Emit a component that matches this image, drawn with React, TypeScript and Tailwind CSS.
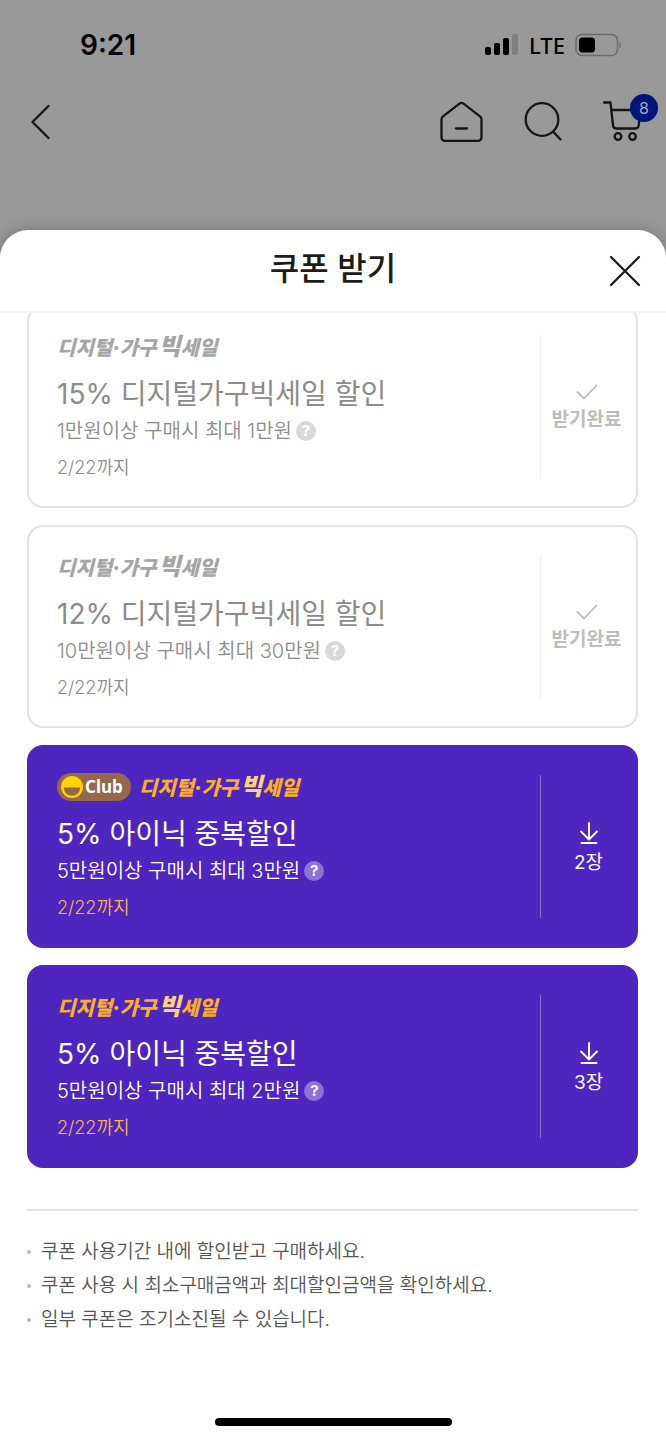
import clsx from 'clsx'

interface Coupon {
  id: number
  title: string
  condition: string
  until: string
  club?: boolean
  claimed?: boolean
  count?: number
}

const coupons: Coupon[] = [
  {
    id: 1,
    title: '15% 디지털가구빅세일 할인',
    condition: '1만원이상 구매시 최대 1만원',
    until: '2/22까지',
    claimed: true,
  },
  {
    id: 2,
    title: '12% 디지털가구빅세일 할인',
    condition: '10만원이상 구매시 최대 30만원',
    until: '2/22까지',
    claimed: true,
  },
  {
    id: 3,
    title: '5% 아이닉 중복할인',
    condition: '5만원이상 구매시 최대 3만원',
    until: '2/22까지',
    club: true,
    count: 2,
  },
  {
    id: 4,
    title: '5% 아이닉 중복할인',
    condition: '5만원이상 구매시 최대 2만원',
    until: '2/22까지',
    count: 3,
  },
]

const notes = [
  '쿠폰 사용기간 내에 할인받고 구매하세요.',
  '쿠폰 사용 시 최소구매금액과 최대할인금액을 확인하세요.',
  '일부 쿠폰은 조기소진될 수 있습니다.',
]

function StatusBar() {
  return (
    <div className="flex h-[90px] items-center justify-between pl-20 pr-11 text-black">
      <span className="text-[28px] font-semibold leading-9">9:21</span>
      <div className="flex items-center gap-2.5">
        <svg width="34" height="22" viewBox="0 0 34 22" aria-hidden="true">
          <rect x="0" y="13" width="6" height="8" rx="2" />
          <rect x="9" y="9" width="6" height="12" rx="2" />
          <rect x="18" y="4" width="6" height="17" rx="2" />
          <rect x="27" y="0" width="6" height="21" rx="2" fill="#808080" />
        </svg>
        <span className="font-['Noto_Sans',sans-serif] text-[22px] font-medium leading-6">LTE</span>
        <svg width="47" height="24" viewBox="0 0 47 24" aria-hidden="true">
          <rect x="1" y="1.5" width="41.5" height="21" rx="6" fill="none" stroke="#6b6b6b" strokeWidth="1.5" />
          <rect x="4" y="4.5" width="16" height="15" rx="3.5" />
          <path d="M44.5 8.5c1.8.8 1.8 6.2 0 7z" fill="#6b6b6b" />
        </svg>
      </div>
    </div>
  )
}

function AppHeader() {
  return (
    <nav className="flex items-center justify-between pl-7 pr-6 text-[#151515]">
      <button type="button" aria-label="뒤로" className="flex h-16 items-center">
        <svg width="24" height="36" viewBox="0 0 24 36" fill="none" stroke="currentColor" strokeWidth="2.3" strokeLinecap="round" strokeLinejoin="round">
          <path d="M20.5 2 4.5 18l16 16" />
        </svg>
      </button>
      <div className="flex items-center gap-10">
        <button type="button" aria-label="홈">
          <svg width="44" height="44" viewBox="0 0 44 44" fill="none" stroke="currentColor" strokeWidth="2.3" strokeLinecap="round" strokeLinejoin="round">
            <path d="M1.5 19.5c0-1.300.5-2.300 1.500-3.100L19.5 3.700c1.300-1 2.700-1 4 0L40 16.400c1 .8 1.500 1.800 1.500 3.100V37.500a3.300 3.300 0 0 1-3.300 3.300H4.800A3.300 3.300 0 0 1 1.500 37.500z" />
            <path d="M16 28.500h11" />
          </svg>
        </button>
        <button type="button" aria-label="검색">
          <svg width="38" height="44" viewBox="0 0 38 44" fill="none" stroke="currentColor" strokeWidth="2.3" strokeLinecap="round">
            <circle cx="18" cy="19.5" r="16.3" />
            <path d="m29.5 32 7 7.5" />
          </svg>
        </button>
        <button type="button" aria-label="장바구니" className="relative">
          <svg width="40" height="44" viewBox="0 0 40 44" fill="none" stroke="currentColor" strokeWidth="2.3" strokeLinecap="round" strokeLinejoin="round">
            <path d="M2 2.500h6.500l2.500 22.800c.2 2.100 1.400 3.200 3.500 3.200h18.500c2 0 3.200-.9 3.600-2.800L39 10H9.700" />
            <circle cx="16" cy="36.5" r="3.3" />
            <circle cx="30.5" cy="36.5" r="3.3" />
          </svg>
          <span className="absolute -right-4 -top-1.5 flex size-7 items-center justify-center rounded-full bg-[#00177a] text-base text-[#a5a9c4]">
            8
          </span>
        </button>
      </div>
    </nav>
  )
}

function SaleLogo({ muted }: { muted?: boolean }) {
  return (
    <span
      className={clsx(
        'flex items-baseline whitespace-nowrap text-[20px] font-black italic leading-7',
        muted ? 'text-[#a5a5a5]' : 'text-[#fbb024]',
      )}
    >
      <span>디지털·가구</span>
      <span className={clsx('ml-0.5 text-[24px]', !muted && 'text-[#ffd27a]')}>빅</span>
      <span>세일</span>
    </span>
  )
}

function ClubBadge() {
  return (
    <span className="flex h-7 items-center gap-0.5 rounded-full bg-[#93694a] pl-1 pr-2 text-white">
      <svg width="22" height="22" viewBox="0 0 20 20" aria-hidden="true">
        <circle cx="10" cy="10" r="10" fill="#ffd200" />
        <path d="M2.500 10.500h15a7.500 7.500 0 0 1-15 0z" fill="#93694a" />
      </svg>
      <span className="font-['Noto_Sans',sans-serif] text-[17px] font-bold leading-6">Club</span>
    </span>
  )
}

function CheckIcon() {
  return (
    <svg width="22" height="16" viewBox="0 0 22 16" fill="none" stroke="currentColor" strokeWidth="1.8" strokeLinecap="round" strokeLinejoin="round">
      <path d="m1.500 8 6.500 6.500L20.500 1.500" />
    </svg>
  )
}

function DownloadIcon() {
  return (
    <svg width="20" height="24" viewBox="0 0 20 24" fill="none" stroke="currentColor" strokeWidth="1.9" strokeLinecap="round" strokeLinejoin="round">
      <path d="M10 2v16M2 10.500l8 8 8-8M2.500 22h15" />
    </svg>
  )
}

function CouponCard({ coupon }: { coupon: Coupon }) {
  const { title, condition, until, club, claimed, count } = coupon
  return (
    <li
      className={clsx(
        'flex items-stretch rounded-2xl border-2',
        claimed ? 'border-[#e2e2e2] bg-white text-[#8c8c8c]' : 'border-[#4e25bf] bg-[#4e25bf] text-white',
      )}
    >
      <div className="min-w-0 flex-1 pb-6 pl-7 pt-7">
        <div className="flex h-6 items-center gap-2">
          {club && <ClubBadge />}
          <SaleLogo muted={claimed} />
        </div>
        <h2 className="mt-4 text-[28px] leading-[38px]">{title}</h2>
        <p className="mt-0.5 flex items-center gap-1 text-[20px] font-[350] leading-8">
          {condition}
          <button
            type="button"
            aria-label="쿠폰 안내"
            className={clsx(
              'flex size-5 items-center justify-center rounded-full text-[15px] font-bold leading-5 text-white',
              claimed ? 'bg-[#d9d9d9]' : 'bg-[#8d73d6]',
            )}
          >
            ?
          </button>
        </p>
        <p className={clsx('mt-[7px] text-[18px] font-[350] leading-7', !claimed && 'text-[#fbb93c]')}>{until}</p>
      </div>
      <button
        type="button"
        disabled={claimed}
        className={clsx(
          'my-7 flex w-24 flex-col items-center justify-center border-l pt-1 text-[19px] leading-7',
          claimed ? 'gap-1.5 border-[#efefef] pr-1 font-bold text-[#bdbdbd]' : 'gap-1 border-[#8a6fd6]',
        )}
      >
        {claimed ? <CheckIcon /> : <DownloadIcon />}
        {claimed ? '받기완료' : `${count}장`}
      </button>
    </li>
  )
}

export default function App() {
  return (
    <div className="flex min-h-screen flex-col bg-[#999999] font-[Inter,'Noto_Sans_CJK_KR',sans-serif]">
      <header className="h-[230px]">
        <StatusBar />
        <AppHeader />
      </header>
      <main className="flex flex-1 flex-col rounded-t-[28px] bg-white shadow-[0_0_16px_rgba(0,0,0,0.25)]">
        <div className="grid h-[83px] grid-cols-[1fr_auto_1fr] items-center border-b-2 border-[#f3f3f3] px-6">
          <h1 className="col-start-2 pb-1 text-[32px] font-medium leading-10 text-[#1c1c1c]">쿠폰 받기</h1>
          <button type="button" aria-label="닫기" className="justify-self-end text-[#1c1c1c]">
            <svg width="34" height="34" viewBox="0 0 34 34" fill="none" stroke="currentColor" strokeWidth="2.3" strokeLinecap="round">
              <path d="m3 3 28 28M31 3 3 31" />
            </svg>
          </button>
        </div>
        <div className="overflow-hidden pl-[27px] pr-7">
          <ul className="-mt-2 flex flex-col gap-[17px]">
            {coupons.map((coupon) => (
              <CouponCard key={coupon.id} coupon={coupon} />
            ))}
          </ul>
          <ul className="mt-[41px] border-t-2 border-[#e3e3e3] pt-6 text-[19px] font-[350] leading-[34px] text-[#555555]">
            {notes.map((note) => (
              <li key={note} className="flex items-center gap-2.5">
                <span className="size-1 rounded-full bg-[#bbbbbb]" />
                {note}
              </li>
            ))}
          </ul>
        </div>
        <div className="mx-auto mb-3.5 mt-auto h-2 w-[237px] rounded-full bg-black" />
      </main>
    </div>
  )
}
